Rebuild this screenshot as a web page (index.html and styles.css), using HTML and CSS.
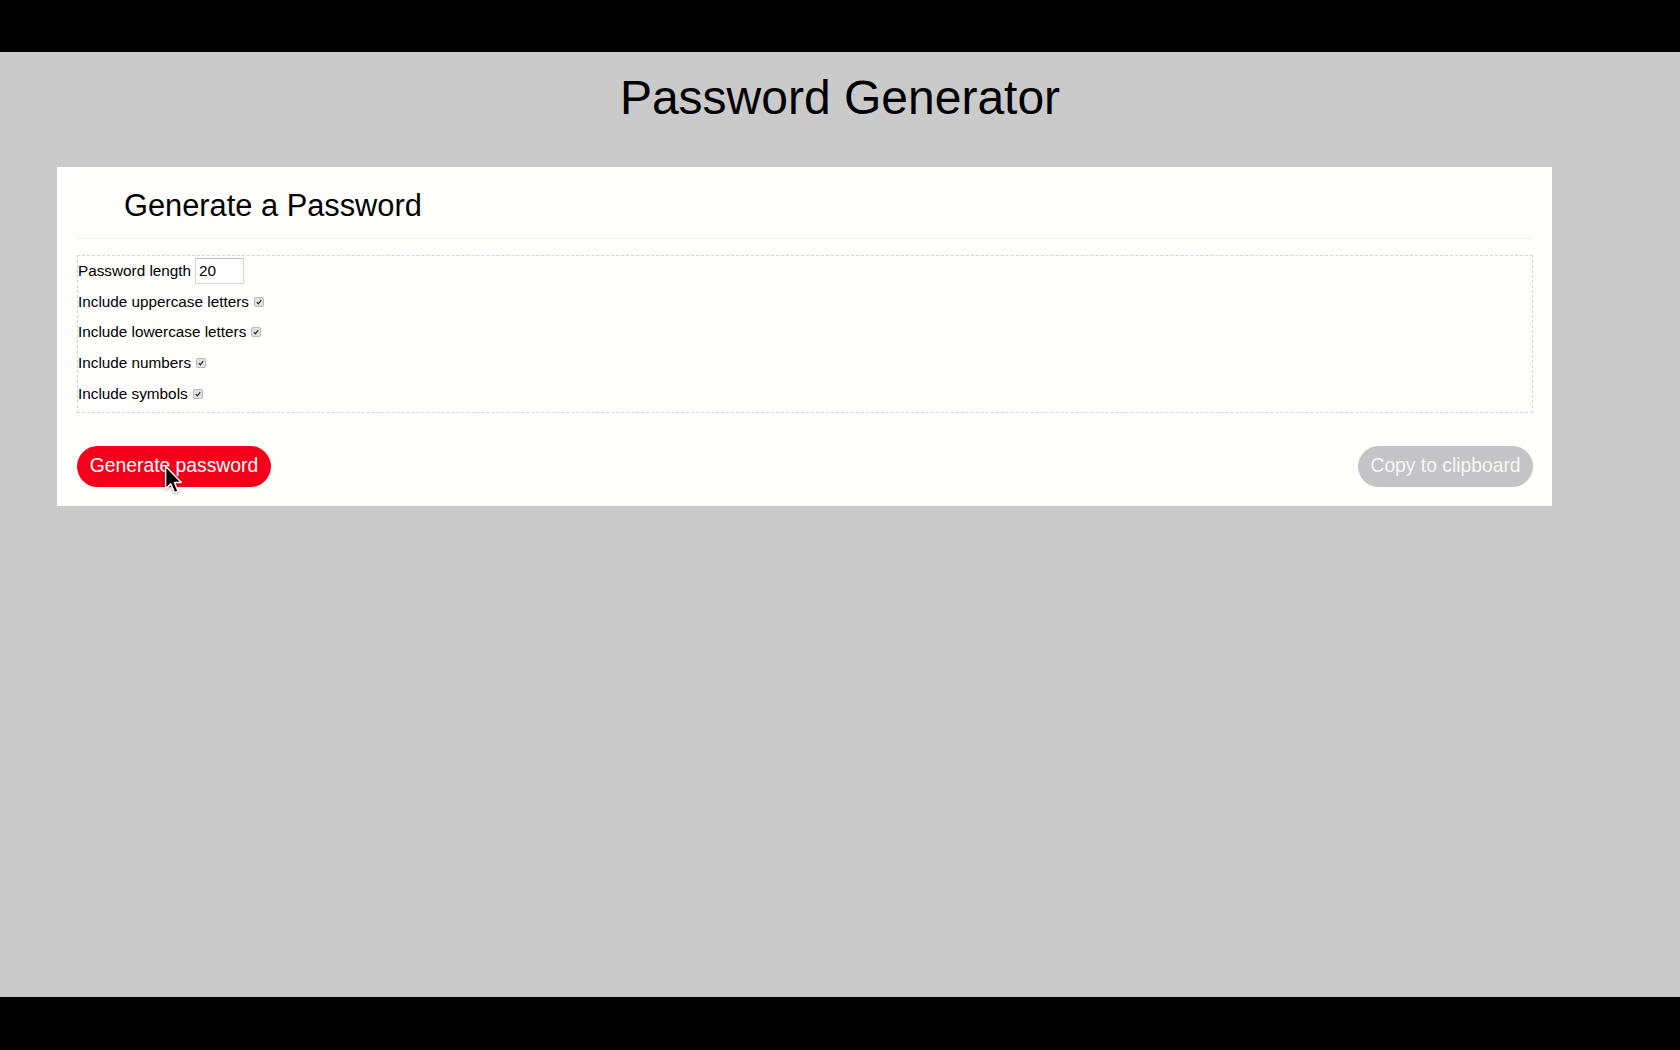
FILE: index.html
```html
<!DOCTYPE html>
<html lang="en">
<head>
<meta charset="utf-8">
<title>Password Generator</title>
<link rel="stylesheet" href="styles.css">
</head>
<body>
<div class="screen">
  <div class="bar bar-top"></div>
  <main class="stage">
    <h1 class="page-title">Password Generator</h1>
    <section class="card">
      <header class="card-header">
        <h2 class="card-title">Generate a Password</h2>
      </header>
      <fieldset class="options">
        <div class="row">
          <label class="label" for="len">Password length</label>
          <input class="num" id="len" type="text" value="20">
        </div>
        <div class="row">
          <span class="label">Include uppercase letters</span>
          <span class="check"><svg viewBox="0 0 10 10" width="10" height="10"><path d="M2.3 5.2 L4.2 7.2 L7.8 2.6" fill="none" stroke="#222" stroke-width="1.5"/></svg></span>
        </div>
        <div class="row">
          <span class="label">Include lowercase letters</span>
          <span class="check"><svg viewBox="0 0 10 10" width="10" height="10"><path d="M2.3 5.2 L4.2 7.2 L7.8 2.6" fill="none" stroke="#222" stroke-width="1.5"/></svg></span>
        </div>
        <div class="row">
          <span class="label">Include numbers</span>
          <span class="check"><svg viewBox="0 0 10 10" width="10" height="10"><path d="M2.3 5.2 L4.2 7.2 L7.8 2.6" fill="none" stroke="#222" stroke-width="1.5"/></svg></span>
        </div>
        <div class="row">
          <span class="label">Include symbols</span>
          <span class="check"><svg viewBox="0 0 10 10" width="10" height="10"><path d="M2.3 5.2 L4.2 7.2 L7.8 2.6" fill="none" stroke="#222" stroke-width="1.5"/></svg></span>
        </div>
      </fieldset>
      <div class="actions">
        <button class="btn btn-primary">Generate password</button>
        <button class="btn btn-muted">Copy to clipboard</button>
      </div>
    </section>
    <svg class="cursor" width="22" height="34" viewBox="0 0 20 30">
      <path d="M1.5 1.5 L1.5 22 L6.2 17.6 L9.6 25.6 L12.8 24.2 L9.5 16.4 L15.8 16.4 Z" fill="#000" stroke="#fff" stroke-width="1.3" stroke-linejoin="round"/>
    </svg>
  </main>
  <div class="bar bar-bottom"></div>
</div>
</body>
</html>
```
FILE: styles.css
```css
* { box-sizing: border-box; }

html, body {
  margin: 0;
  padding: 0;
  background: #000;
}

body {
  font-family: "Liberation Sans", Arial, Helvetica, sans-serif;
  color: #000;
}

.screen {
  width: 1680px;
  height: 1050px;
  display: flex;
  flex-direction: column;
}

.bar-top { height: 52px; background: #000; }
.bar-bottom { height: 53px; background: #000; }

.stage {
  flex: 1;
  position: relative;
  background: #cacacb;
  padding-top: 18px;
}

.page-title {
  margin: 0;
  text-align: center;
  font-size: 48px;
  line-height: 55px;
  font-weight: normal;
}

.card {
  margin: 42px 128px 0 57px;
  background: #fefefd;
  padding: 21px 19px 19px 20px;
}

.card-header {
  padding: 0 0 15px 47px;
  border-bottom: 1px dotted #ecebc4;
}

.card-title {
  margin: 0;
  font-size: 30.8px;
  line-height: 35px;
  font-weight: normal;
}

.options {
  margin: 16px 0 0;
  padding: 0 0 3px;
  border: 1px dashed #d4d3e4;
  min-width: 0;
}

.row {
  height: 30.6px;
  display: flex;
  align-items: center;
  font-size: 15.3px;
}

.num {
  margin-left: 4px;
  width: 49px;
  height: 26px;
  border: 1px solid #d6d6d6;
  border-top-color: #c2c2c2;
  padding: 0 0 0 3px;
  font: 15.3px "Liberation Sans", Arial, sans-serif;
  color: #000;
  background: #fff;
  outline: none;
}

.check {
  margin-left: 5px;
  width: 10px;
  height: 10px;
  border: 1px solid #b8b8b8;
  border-radius: 2px;
  background: #e2e2e2;
  display: inline-flex;
  align-items: center;
  justify-content: center;
}

.check svg { width: 8px; height: 8px; display: block; }

.actions {
  margin-top: 33px;
  display: flex;
  justify-content: space-between;
}

.btn {
  height: 41px;
  border: 0;
  border-radius: 21px;
  padding: 0 12px;
  font: 19.3px "Liberation Sans", Arial, sans-serif;
  color: #fff;
  white-space: nowrap;
}

.btn-primary {
  width: 194px;
  background: #f5001a;
}

.btn-muted {
  width: 175px;
  background: #c4c4c6;
  color: #f7f7f2;
}

.cursor {
  position: absolute;
  left: 164px;
  top: 412px;
  filter: drop-shadow(0 1px 1.5px rgba(0,0,0,0.35));
}
```
